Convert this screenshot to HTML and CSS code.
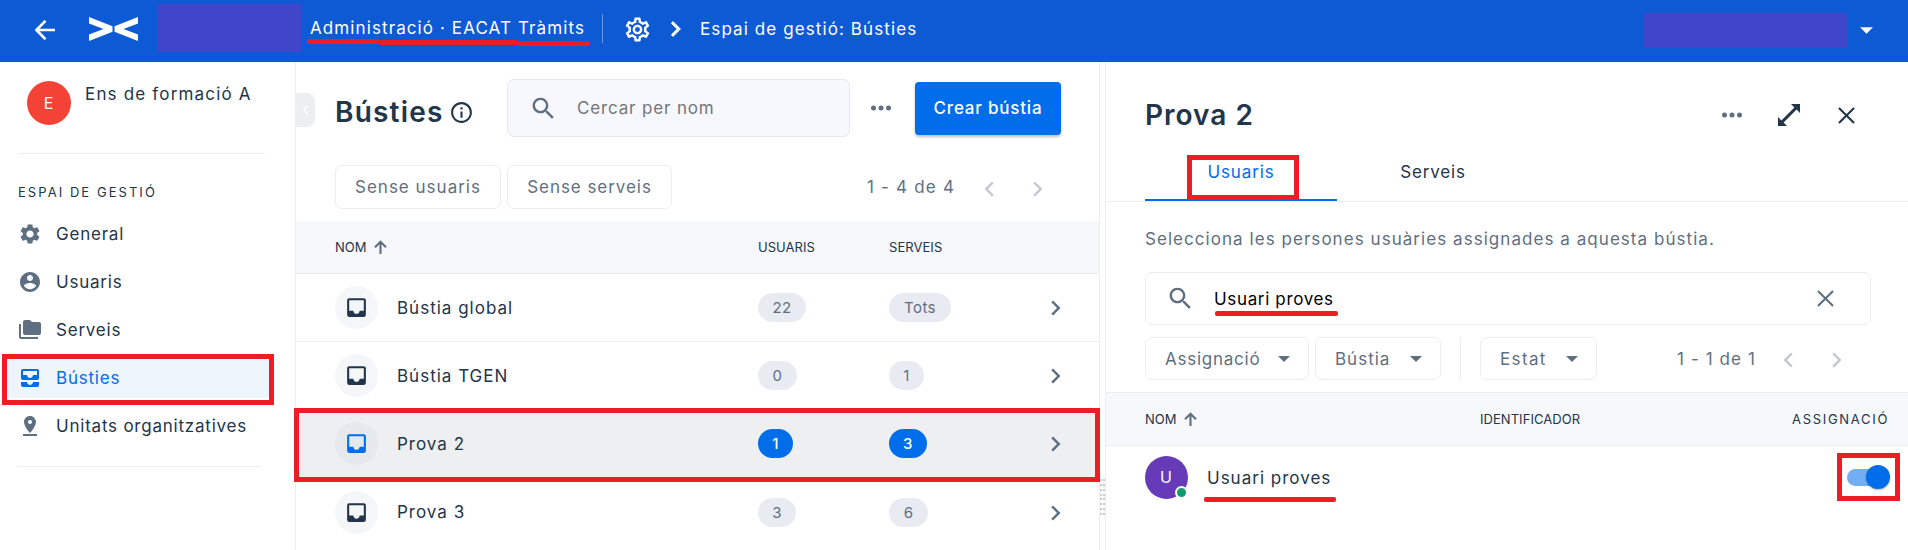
FILE: index.html
```html
<!DOCTYPE html>
<html lang="ca">
<head>
<meta charset="utf-8">
<title>Espai de gestió: Bústies</title>
<link rel="stylesheet" href="styles.css">
</head>
<body>

<svg class="defs">
  <symbol id="i-gear" viewBox="0 0 24 24"><path d="M19.14 12.94c.04-.3.06-.61.06-.94 0-.32-.02-.64-.07-.94l2.03-1.58c.18-.14.23-.41.12-.61l-1.92-3.32c-.12-.22-.37-.29-.59-.22l-2.39.96c-.5-.38-1.03-.7-1.62-.94l-.36-2.54c-.04-.24-.24-.41-.48-.41h-3.84c-.24 0-.43.17-.47.41l-.36 2.54c-.59.24-1.13.57-1.62.94l-2.39-.96c-.22-.08-.47 0-.59.22L2.74 8.87c-.12.21-.08.47.12.61l2.03 1.58c-.05.3-.09.63-.09.94s.02.64.07.94l-2.03 1.58c-.18.14-.23.41-.12.61l1.92 3.32c.12.22.37.29.59.22l2.39-.96c.5.38 1.03.7 1.62.94l.36 2.54c.05.24.24.41.48.41h3.84c.24 0 .44-.17.47-.41l.36-2.54c.59-.24 1.13-.56 1.62-.94l2.39.96c.22.08.47 0 .59-.22l1.92-3.32c.12-.22.07-.47-.12-.61l-2.01-1.58zM12 15.6c-1.98 0-3.6-1.62-3.6-3.6s1.62-3.6 3.6-3.6 3.6 1.62 3.6 3.6-1.62 3.6-3.6 3.6z"/></symbol>
  <symbol id="i-gear-outline" viewBox="0 0 24 24"><path d="M19.43 12.98c.04-.32.07-.64.07-.98s-.03-.66-.07-.98l2.11-1.65c.19-.15.24-.42.12-.64l-2-3.46c-.12-.22-.39-.3-.61-.22l-2.49 1c-.52-.4-1.08-.73-1.69-.98l-.38-2.65C14.46 2.18 14.25 2 14 2h-4c-.25 0-.46.18-.49.42l-.38 2.65c-.61.25-1.17.59-1.69.98l-2.49-1c-.23-.09-.49 0-.61.22l-2 3.46c-.13.22-.07.49.12.64l2.11 1.65c-.04.32-.07.65-.07.98s.03.66.07.98l-2.11 1.65c-.19.15-.24.42-.12.64l2 3.46c.12.22.39.3.61.22l2.49-1c.52.4 1.08.73 1.69.98l.38 2.65c.03.24.24.42.49.42h4c.25 0 .46-.18.49-.42l.38-2.65c.61-.25 1.17-.59 1.69-.98l2.49 1c.23.09.49 0 .61-.22l2-3.46c.12-.22.07-.49-.12-.64l-2.11-1.65zm-1.98-1.71c.04.31.05.52.05.73s-.02.43-.05.73l-.14 1.13.89.7 1.08.84-.7 1.21-1.27-.51-1.04-.42-.9.68c-.43.32-.84.56-1.25.73l-1.06.43-.16 1.13-.2 1.35h-1.4l-.19-1.35-.16-1.13-1.06-.43c-.43-.18-.83-.41-1.23-.71l-.91-.7-1.06.43-1.27.51-.7-1.21 1.08-.84.89-.7-.14-1.13c-.03-.31-.05-.54-.05-.74s.02-.43.05-.73l.14-1.13-.89-.7-1.08-.84.7-1.21 1.27.51 1.04.42.9-.68c.43-.32.84-.56 1.25-.73l1.06-.43.16-1.13.2-1.35h1.39l.19 1.35.16 1.13 1.06.43c.43.18.83.41 1.23.71l.91.7 1.06-.43 1.27-.51.7 1.21-1.07.85-.89.7.14 1.13zM12 8c-2.210 0-4 1.790-4 4s1.790 4 4 4 4-1.790 4-4-1.790-4-4-4zm0 6c-1.100 0-2-.9-2-2s.9-2 2-2 2 .9 2 2-.9 2-2 2z"/></symbol>
  <symbol id="i-user" viewBox="0 0 24 24"><path d="M12 2C6.480 2 2 6.480 2 12s4.480 10 10 10 10-4.480 10-10S17.520 2 12 2zm0 3c1.660 0 3 1.340 3 3s-1.340 3-3 3-3-1.340-3-3 1.340-3 3-3zm0 14.200c-2.500 0-4.710-1.280-6-3.220.03-1.990 4-3.080 6-3.080 1.990 0 5.970 1.090 6 3.080-1.290 1.940-3.500 3.220-6 3.220z"/></symbol>
  <symbol id="i-folders" viewBox="0 0 24 24"><path d="M3 6H1v13c0 1.100.9 2 2 2h17v-2H3V6zm18-2h-7l-2-2H7c-1.100 0-1.990.9-1.990 2L5 15c0 1.100.9 2 2 2h14c1.100 0 2-.9 2-2V6c0-1.100-.9-2-2-2z"/></symbol>
  <symbol id="i-all-inbox" viewBox="0 0 24 24"><path d="M19 3H5c-1.100 0-2 .9-2 2v7c0 1.100.9 2 2 2h14c1.100 0 2-.9 2-2V5c0-1.100-.9-2-2-2zm0 6h-4c0 1.620-1.380 3-3 3s-3-1.380-3-3H5V5h14v4zm-4 7h6v3c0 1.100-.9 2-2 2H5c-1.100 0-2-.9-2-2v-3h6c0 1.660 1.340 3 3 3s3-1.340 3-3z"/></symbol>
  <symbol id="i-pin" viewBox="0 0 24 24"><path d="M18 8c0-3.310-2.690-6-6-6S6 4.690 6 8c0 4.500 6 11 6 11s6-6.500 6-11zm-8 0c0-1.100.9-2 2-2s2 .9 2 2-.89 2-2 2c-1.100 0-2-.9-2-2zM5 20v2h14v-2H5z"/></symbol>
  <symbol id="i-inbox" viewBox="0 0 24 24"><path d="M19 3H4.990c-1.110 0-1.980.89-1.980 2L3 19c0 1.100.88 2 1.990 2H19c1.100 0 2-.9 2-2V5c0-1.110-.9-2-2-2zm0 12h-4c0 1.660-1.350 3-3 3s-3-1.340-3-3H4.990V5H19v10z"/></symbol>
  <symbol id="i-search" viewBox="0 0 24 24"><path d="M15.500 14h-.79l-.28-.27C15.410 12.590 16 11.110 16 9.500 16 5.910 13.090 3 9.500 3S3 5.910 3 9.500 5.910 16 9.500 16c1.610 0 3.090-.59 4.230-1.570l.27.28v.79l5 4.990L20.490 19l-4.990-5zm-6 0C7.010 14 5 11.990 5 9.500S7.010 5 9.500 5 14 7.010 14 9.500 11.990 14 9.500 14z"/></symbol>
  <symbol id="i-info" viewBox="0 0 24 24"><path d="M11 17h2v-6h-2v6zm1-15C6.480 2 2 6.480 2 12s4.480 10 10 10 10-4.480 10-10S17.520 2 12 2zm0 18c-4.410 0-8-3.590-8-8s3.590-8 8-8 8 3.590 8 8-3.590 8-8 8zM11 9h2V7h-2v2z"/></symbol>
  <symbol id="i-right" viewBox="0 0 10 16"><path d="M2 0.500 9.500 8 2 15.500 0.300 13.800 6 8 0.300 2.200z"/></symbol>
  <symbol id="i-left" viewBox="0 0 10 16"><path d="M8 0.500 0.500 8 8 15.500 9.700 13.800 4 8 9.700 2.200z"/></symbol>
  <symbol id="i-dots" viewBox="0 0 20 6"><circle cx="2.500" cy="3" r="2.500"/><circle cx="10" cy="3" r="2.500"/><circle cx="17.500" cy="3" r="2.500"/></symbol>
  <symbol id="i-close" viewBox="0 0 18 18"><path d="M1 1 17 17M17 1 1 17" fill="none" stroke="currentColor" stroke-width="2.200"/></symbol>
  <symbol id="i-up" viewBox="0 0 13 14"><path d="M6.500 14V2M1 7.200 6.500 1.700 12 7.200" fill="none" stroke="currentColor" stroke-width="2.100"/></symbol>
  <symbol id="i-caret" viewBox="0 0 12 6"><path d="M0 0h12L6 6z"/></symbol>
</svg>

<header class="topbar">
  <svg class="back" viewBox="0 0 20 20"><path d="M20 10H2M10.500 .8 1.300 10l9.200 9.200" fill="none" stroke="#fff" stroke-width="2.600"/></svg>
  <svg class="logo" viewBox="0 0 49 24"><path d="M0 0 23.500 9.300v5.400L0 24v-6.500L14.500 12 0 6.500zM49 0 25.500 9.300v5.400L49 24v-6.500L34.500 12 49 6.500z"/></svg>
  <div class="hidden-name"></div>
  <div class="org">Administració · EACAT Tràmits
    <i class="mark m-org1"></i><i class="mark m-org2"></i><i class="mark m-org3"></i>
  </div>
  <div class="sep"></div>
  <svg class="settings"><use href="#i-gear-outline"/></svg>
  <svg class="crumb"><use href="#i-right"/></svg>
  <div class="page">Espai de gestió: Bústies</div>
  <div class="hidden-user"></div>
  <svg class="caret-user"><use href="#i-caret"/></svg>
</header>

<div class="layout">

<nav class="sidebar">
  <div class="entity"><span class="entity-avatar">E</span><span class="entity-name">Ens de formació A</span></div>
  <h3>ESPAI DE GESTIÓ</h3>
  <a class="item"><svg><use href="#i-gear"/></svg>General</a>
  <a class="item"><svg><use href="#i-user"/></svg>Usuaris</a>
  <a class="item"><svg><use href="#i-folders"/></svg>Serveis</a>
  <a class="item active"><svg><use href="#i-all-inbox"/></svg>Bústies<i class="box b-nav"></i></a>
  <a class="item"><svg><use href="#i-pin"/></svg>Unitats organitzatives</a>
  <div class="line"></div>
</nav>

<main class="list">
  <div class="collapse"><svg><use href="#i-left"/></svg></div>
  <div class="list-head">
    <h1>Bústies</h1>
    <svg class="info"><use href="#i-info"/></svg>
    <div class="search"><svg><use href="#i-search"/></svg>Cercar per nom</div>
    <svg class="dots"><use href="#i-dots"/></svg>
    <button class="create">Crear bústia</button>
  </div>
  <div class="filters">
    <span class="chip c1">Sense usuaris</span>
    <span class="chip c2">Sense serveis</span>
    <span class="pager">1 - 4 de 4</span>
    <svg class="prev"><use href="#i-left"/></svg>
    <svg class="next"><use href="#i-right"/></svg>
  </div>
  <div class="row thead"><span class="name">NOM<svg class="up"><use href="#i-up"/></svg></span><span>USUARIS</span><span>SERVEIS</span></div>
  <div class="row">
    <span class="name"><b class="round"><svg><use href="#i-inbox"/></svg></b>Bústia global</span>
    <span><em class="w48">22</em></span><span><em class="w62">Tots</em></span><svg class="go"><use href="#i-right"/></svg>
  </div>
  <div class="row">
    <span class="name"><b class="round"><svg><use href="#i-inbox"/></svg></b>Bústia TGEN</span>
    <span><em class="w39">0</em></span><span><em class="w35">1</em></span><svg class="go"><use href="#i-right"/></svg>
  </div>
  <div class="row selected">
    <span class="name"><b class="round"><svg><use href="#i-inbox"/></svg></b>Prova 2</span>
    <span><em class="w35">1</em></span><span><em class="w38">3</em></span><svg class="go"><use href="#i-right"/></svg>
    <i class="box b-row"></i>
  </div>
  <div class="row last">
    <span class="name"><b class="round"><svg><use href="#i-inbox"/></svg></b>Prova 3</span>
    <span><em class="w38">3</em></span><span><em class="w39">6</em></span><svg class="go"><use href="#i-right"/></svg>
  </div>
</main>

<div class="splitter"><div class="grip"></div></div>

<section class="detail">
  <div class="detail-head">
    <h1>Prova 2</h1>
    <svg class="dots"><use href="#i-dots"/></svg>
    <svg class="expand" viewBox="0 0 22 22"><path d="M13 0h9v9l-3.400-3.400L5.600 18.600 9 22H0v-9l3.400 3.400L16.400 3.400z"/></svg>
    <svg class="close"><use href="#i-close"/></svg>
  </div>
  <div class="tabs">
    <div class="tab on">Usuaris<i class="box b-tab"></i></div>
    <div class="tab">Serveis</div>
  </div>
  <p class="hint">Selecciona les persones usuàries assignades a aquesta bústia.</p>
  <div class="search-user">
    <svg class="lens"><use href="#i-search"/></svg>
    <span class="query">Usuari proves<i class="mark m-query"></i></span>
    <svg class="close"><use href="#i-close"/></svg>
  </div>
  <div class="filters-user">
    <span class="chip d1">Assignació<svg><use href="#i-caret"/></svg></span>
    <span class="chip d2">Bústia<svg><use href="#i-caret"/></svg></span>
    <span class="bar"></span>
    <span class="chip d3">Estat<svg><use href="#i-caret"/></svg></span>
    <span class="pager">1 - 1 de 1</span>
    <svg class="prev"><use href="#i-left"/></svg>
    <svg class="next"><use href="#i-right"/></svg>
  </div>
  <div class="user-head"><span class="col1">NOM<svg class="up"><use href="#i-up"/></svg></span><span class="col2">IDENTIFICADOR</span><span class="col3">ASSIGNACIÓ</span></div>
  <div class="user-row">
    <span class="user-avatar">U<i class="online"></i></span>
    <span class="user-name">Usuari proves<i class="mark m-user"></i></span>
    <span class="toggle"><i class="box b-toggle"></i></span>
  </div>
</section>

</div>
</body>
</html>
```
FILE: styles.css
```css
* {
  box-sizing: border-box;
}

body {
  margin: 0;
  height: 550px;
  overflow: hidden;
  background: #fff;
  color: #22354a;
  font-family: Inter, "Liberation Sans", sans-serif;
  font-size: 17px;
  line-height: 20px;
  letter-spacing: 1px;
  white-space: nowrap;
}

svg {
  display: block;
  flex: none;
  fill: currentColor;
}

.defs {
  position: absolute;
  width: 0;
  height: 0;
}

h1 {
  margin: 0;
  font-size: 28px;
  line-height: 34px;
  font-weight: 600;
}

/* red annotations */
.box {
  position: absolute;
  z-index: 5;
  border: 5px solid #ee1c24;
}
.mark {
  position: absolute;
  z-index: 5;
  height: 5px;
  border-radius: 2px;
  background: #ee1c24;
}

/* top bar */
.topbar {
  display: flex;
  align-items: center;
  height: 62px;
  background: #0e5ad5;
  color: #fff;
}
.back {
  width: 20px;
  height: 20px;
  margin: 0 34px 3px 35px;
}
.logo {
  width: 49px;
  height: 24px;
  margin-bottom: 5px;
}
.hidden-name {
  width: 144px;
  height: 48px;
  margin: 0 9px 6px 19px;
  background: #4046ca;
}
.org {
  position: relative;
  width: 292px;
  padding-bottom: 6px;
  letter-spacing: 1.1px;
}
.m-org1 { left: -3px; top: 21px; width: 73px; }
.m-org2 { left: 69px; top: 22px; width: 139px; }
.m-org3 { left: 207px; top: 23px; width: 73px; }
.sep {
  width: 1px;
  height: 29px;
  margin-bottom: 5px;
  background: #6a99e6;
}
.settings {
  width: 29px;
  height: 29px;
  margin: 0 17px 3px 20px;
}
.crumb {
  width: 10px;
  height: 16px;
  margin: 0 19px 5px 2px;
}
.topbar .crumb {
  stroke: #fff;
  stroke-width: 0.8;
}
.page {
  padding-bottom: 4px;
  letter-spacing: 1.1px;
}
.hidden-user {
  width: 204px;
  height: 35px;
  margin: 0 12px 1px auto;
  background: #4046ca;
}
.caret-user {
  width: 13px;
  height: 7px;
  margin: 0 35px 2px 0;
}

.layout {
  display: flex;
  height: 488px;
}

/* sidebar */
.sidebar {
  width: 296px;
  padding-left: 18px;
  border-right: 1px solid #ebedef;
}
.entity {
  display: flex;
  width: 247px;
  height: 92px;
  padding: 19px 0 0 9px;
  border-bottom: 1px solid #ebedef;
}
.entity-avatar {
  width: 44px;
  height: 44px;
  border-radius: 50%;
  background: #f44336;
  color: #fff;
  font-size: 16px;
  line-height: 44px;
  text-align: center;
}
.entity-name {
  padding: 3px 0 0 14px;
  letter-spacing: 1.17px;
}
.sidebar h3 {
  margin: 28px 0 11px;
  font-size: 13px;
  line-height: 21px;
  font-weight: 400;
  letter-spacing: 2.05px;
}
.item {
  position: relative;
  display: flex;
  align-items: center;
  height: 40px;
  margin: 0 26px 8px -16px;
  padding-left: 16px;
  letter-spacing: 0.78px;
}
.item svg {
  width: 24px;
  height: 24px;
  margin-right: 14px;
  color: #5f6f82;
}
.item.active,
.item.active svg {
  color: #006deb;
}
.item.active {
  background: #eff5fd;
}
.b-nav { left: 0; top: -4px; width: 272px; height: 51px; }
.line {
  width: 242px;
  margin-top: 20px;
  border-top: 1px solid #ebedef;
}

/* list of mailboxes */
.list {
  position: relative;
  width: 804px;
  border-right: 1px solid #ebedef;
}
.collapse {
  position: absolute;
  left: 0;
  top: 31px;
  width: 19px;
  height: 34px;
  padding: 12px 0 0 6px;
  border-radius: 0 8px 8px 0;
  background: #eceef0;
  color: #fff;
}
.collapse svg {
  width: 7px;
  height: 10px;
}
.list-head {
  display: flex;
  align-items: center;
  height: 93px;
  padding: 0 0 1px 39px;
}
.list-head h1 {
  padding-top: 8px;
  width: 114px;
  letter-spacing: 1.2px;
}
.info {
  width: 25px;
  height: 25px;
  margin-top: 9px;
}
.search {
  display: flex;
  align-items: center;
  width: 343px;
  height: 58px;
  margin-left: 33px;
  padding-left: 21px;
  border: 1px solid #e5e8ef;
  border-radius: 7px;
  background: #f7f8fd;
  color: #757575;
  letter-spacing: 0.85px;
}
.search svg {
  width: 29px;
  height: 29px;
  margin-right: 19px;
  color: #5f6f82;
}
.dots {
  width: 20px;
  height: 6px;
  color: #5f6f82;
}
.list-head .dots {
  margin-left: 21px;
}
.create {
  width: 146px;
  height: 53px;
  margin-left: 24px;
  padding: 0;
  border: 0;
  border-radius: 4px;
  background: #006deb;
  box-shadow: 0 2px 3px rgba(0, 0, 0, 0.25);
  color: #fff;
  font: 500 17px/20px Inter, "Liberation Sans", sans-serif;
  letter-spacing: 0.8px;
}
.filters,
.filters-user {
  display: flex;
  align-items: center;
  color: #5f6f82;
}
.filters {
  height: 44px;
  margin: 10px 0 12px 39px;
}
.chip {
  display: flex;
  align-items: center;
  justify-content: center;
  height: 44px;
  border: 1px solid #ebedf0;
  border-radius: 7px;
}
.c1 { width: 166px; margin-right: 6px; }
.c2 { width: 165px; letter-spacing: 0.95px; }
.filters .pager {
  width: 117px;
  margin-left: 195px;
  letter-spacing: 1.2px;
}
.prev,
.next {
  width: 10px;
  height: 16px;
  margin-top: 3px;
  color: #c4c9cf;
}
.next {
  margin-left: 39px;
}
.row {
  position: relative;
  display: grid;
  grid-template-columns: 423px 131px 162px 10px;
  align-items: center;
  height: 68px;
  padding-left: 39px;
  border-bottom: 1px solid #ebedef;
}
.row.thead {
  height: 53px;
  background: #f7f8fc;
}
.row.last {
  border: 0;
}
.row.selected {
  background: #edeff0;
}
.name {
  display: flex;
  align-items: center;
}
.thead,
.user-head {
  font-size: 13px;
  letter-spacing: 0.05px;
}
.up {
  width: 13px;
  height: 14px;
  margin-left: 7px;
  color: #5f6f82;
}
.round {
  width: 43px;
  height: 43px;
  margin-right: 19px;
  padding: 9px;
  border-radius: 50%;
  background: #f5f6f8;
}
.round svg {
  width: 25px;
  height: 25px;
}
.selected .round {
  background: #e5e8ec;
  color: #006deb;
}
.row em {
  display: block;
  height: 29px;
  border-radius: 15px;
  background: #e8ebf2;
  color: #5f6f82;
  font-size: 15px;
  line-height: 29px;
  font-style: normal;
  letter-spacing: 0.4px;
  text-align: center;
}
.row.selected em {
  background: #006deb;
  color: #fff;
  font-weight: 500;
}
.w35 { width: 35px; }
.w38 { width: 38px; }
.w39 { width: 39px; }
.w48 { width: 48px; }
.w62 { width: 62px; }
.go {
  width: 10px;
  height: 16px;
  margin-top: 1px;
  color: #5f6f82;
}
.b-row { left: -2px; top: -2px; width: 806px; height: 74px; }

/* splitter */
.splitter {
  width: 5px;
  padding-top: 417px;
}
.grip {
  height: 37px;
  background:
    linear-gradient(90deg, transparent 2px, #fff 2px, #fff 3px, transparent 3px),
    repeating-linear-gradient(#ccc 0, #ccc 2px, #fff 2px, #fff 4.85px);
}

/* detail panel */
.detail {
  flex: 1;
  border-left: 1px solid #ebedef;
}
.detail-head {
  display: flex;
  align-items: center;
  height: 89px;
  padding: 17px 53px 0 39px;
}
.detail-head .dots {
  margin-left: auto;
}
.detail-head .expand {
  width: 22px;
  height: 22px;
  margin: 0 38px 0 36px;
}
.close {
  width: 17px;
  height: 17px;
}
.tabs {
  display: flex;
  height: 51px;
  padding-left: 39px;
  border-bottom: 1px solid #ebedef;
}
.tab {
  position: relative;
  width: 192px;
  padding-top: 11px;
  text-align: center;
  letter-spacing: 0.85px;
}
.tab.on {
  border-bottom: 2px solid #006deb;
  color: #006deb;
}
.b-tab { left: 42px; top: 4px; width: 112px; height: 45px; }
.hint {
  margin: 27px 0 23px 39px;
  color: #5f6f82;
  letter-spacing: 1.05px;
}
.search-user {
  display: flex;
  align-items: center;
  width: 726px;
  height: 53px;
  margin-left: 39px;
  padding: 0 36px 0 20px;
  border: 1px solid #ebedf0;
  border-radius: 7px;
  color: #5f6f82;
}
.lens {
  width: 29px;
  height: 29px;
  margin-right: 19px;
}
.query {
  position: relative;
  flex: 1;
  color: #000;
  letter-spacing: 0.65px;
}
.m-query { left: 1px; top: 22px; width: 123px; }
.filters-user {
  margin: 12px 0 12px 39px;
}
.filters-user .chip {
  height: 43px;
  justify-content: flex-start;
  padding-left: 19px;
}
.filters-user .chip svg {
  width: 12px;
  height: 6px;
  margin-left: auto;
}
.d1 { width: 164px; padding-right: 18px; margin-right: 6px; letter-spacing: 0.75px; }
.d2 { width: 126px; padding-right: 18px; }
.d3 { width: 117px; padding-right: 18px; letter-spacing: 1.35px; }
.bar {
  width: 1px;
  height: 43px;
  margin: 0 19px;
  background: #ebedf0;
}
.filters-user .pager {
  width: 106px;
  margin-left: 80px;
  letter-spacing: 1.1px;
}
.user-head {
  display: flex;
  align-items: center;
  height: 54px;
  border: 1px solid #ebedef;
  border-width: 1px 0;
  padding: 0 0 1px 39px;
  background: #f7f8fc;
}
.col1 {
  display: flex;
  align-items: center;
  width: 335px;
}
.col2 {
  width: 312px;
}
.col3 {
  letter-spacing: 1.7px;
}
.user-row {
  display: flex;
  align-items: center;
  height: 63px;
  padding-left: 39px;
}
.user-avatar {
  position: relative;
  width: 43px;
  height: 43px;
  margin-right: 19px;
  border-radius: 50%;
  background: #673ab7;
  color: #fff;
  font-size: 16px;
  line-height: 43px;
  text-align: center;
}
.online {
  position: absolute;
  right: 0;
  bottom: 0;
  width: 13px;
  height: 13px;
  border: 2px solid #fff;
  border-radius: 50%;
  background: #119b6c;
}
.user-name {
  position: relative;
}
.m-user { left: -3px; top: 29px; width: 132px; }
.toggle {
  position: relative;
  width: 40px;
  height: 17px;
  margin: 0 21px 0 auto;
  border-radius: 9px;
  background: #73aef4;
}
.toggle::after {
  content: "";
  position: absolute;
  right: -3px;
  top: -4px;
  width: 24px;
  height: 24px;
  border-radius: 50%;
  background: #006deb;
  box-shadow: 0 1px 2px rgba(0, 0, 0, 0.3);
}
.b-toggle { left: -10px; top: -16px; width: 63px; height: 48px; }
```
